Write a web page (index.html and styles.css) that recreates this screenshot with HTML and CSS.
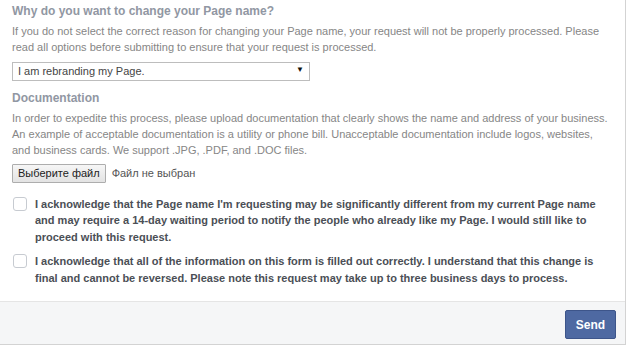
FILE: index.html
```html
<!DOCTYPE html>
<html lang="en">
<head>
    <meta charset="UTF-8">
    <title>Change Page Name</title>
    <link rel="stylesheet" href="styles.css">
</head>
<body>
    <div class="card">
        <div class="content">
            <div class="section">
                <h3 class="label">Why do you want to change your Page name?</h3>
                <p class="hint">If you do not select the correct reason for changing your Page name, your request will not be properly processed. Please read all options before submitting to ensure that your request is processed.</p>
                <div class="select-wrap">
                    <select class="reason">
                        <option>I am rebranding my Page.</option>
                    </select>
                    <span class="arrow">&#9660;</span>
                </div>
            </div>

            <div class="section">
                <h3 class="label">Documentation</h3>
                <p class="hint">In order to expedite this process, please upload documentation that clearly shows the name and address of your business. An example of acceptable documentation is a utility or phone bill. Unacceptable documentation include logos, websites, and business cards. We support .JPG, .PDF, and .DOC files.</p>
                <div class="file-row">
                    <button class="file-button" type="button">Выберите файл</button>
                    <span class="file-name">Файл не выбран</span>
                </div>
            </div>

            <div class="checks">
                <label class="check">
                    <input type="checkbox">
                    <span>I acknowledge that the Page name I'm requesting may be significantly different from my current Page name and may require a 14-day waiting period to notify the people who already like my Page. I would still like to proceed with this request.</span>
                </label>
                <label class="check">
                    <input type="checkbox">
                    <span>I acknowledge that all of the information on this form is filled out correctly. I understand that this change is final and cannot be reversed. Please note this request may take up to three business days to process.</span>
                </label>
            </div>
        </div>

        <div class="footer">
            <button class="send" type="button">Send</button>
        </div>
    </div>
</body>
</html>
```

FILE: styles.css
```css
body {
    margin: 0;
    background-color: #fff;
    font-family: "Liberation Sans", Arial, sans-serif;
}
.card {
    width: 625px;
    border-right: 1px solid #d3d3d3;
    border-bottom: 1px solid #d3d3d3;
}
.content {
    padding: 3px 12px 7px 12px;
}
.section {
    margin-bottom: 9px;
}
.label {
    margin: 0;
    font-size: 12px;
    font-weight: bold;
    color: #9197a3;
    line-height: 16px;
}
.hint {
    margin: 4px 0 6px 0;
    font-size: 11px;
    line-height: 16px;
    color: #868686;
}
.select-wrap {
    position: relative;
    width: 298px;
}
.reason {
    appearance: none;
    -webkit-appearance: none;
    width: 298px;
    height: 19px;
    border: 1px solid #bdbdbd;
    border-radius: 0;
    background: #fff;
    padding: 0 5px;
    font-family: inherit;
    font-size: 11px;
    color: #444;
}
.arrow {
    position: absolute;
    right: 6px;
    top: 4px;
    font-size: 8px;
    color: #111;
    pointer-events: none;
}
.file-row {
    display: flex;
    align-items: center;
    gap: 6px;
}
.file-button {
    height: 19px;
    padding: 0 5px;
    border: 1px solid #adadad;
    border-radius: 1px;
    background: linear-gradient(#f6f6f6, #e3e3e3);
    font-family: inherit;
    font-size: 11px;
    color: #222;
}
.file-name {
    font-size: 11px;
    color: #555;
}
.checks {
    padding-top: 4px;
}
.check {
    display: flex;
    align-items: flex-start;
    gap: 8px;
    margin-bottom: 8px;
    font-size: 11px;
    font-weight: bold;
    line-height: 16.5px;
    color: #4b4f56;
}
.check input {
    appearance: none;
    -webkit-appearance: none;
    flex: none;
    width: 14px;
    height: 14px;
    margin: 1px 0 0 1px;
    border: 1px solid #c7cbd1;
    border-radius: 3px;
    background: #fff;
}
.footer {
    display: flex;
    justify-content: flex-end;
    padding: 8px 9px 5px 0;
    border-top: 1px solid #e5e5e5;
    background-color: #f5f6f7;
}
.send {
    width: 51px;
    height: 29px;
    border: 1px solid #3d558a;
    border-radius: 2px;
    background-color: #4e69a2;
    color: #fff;
    font-family: inherit;
    font-size: 12px;
    font-weight: bold;
}
```
